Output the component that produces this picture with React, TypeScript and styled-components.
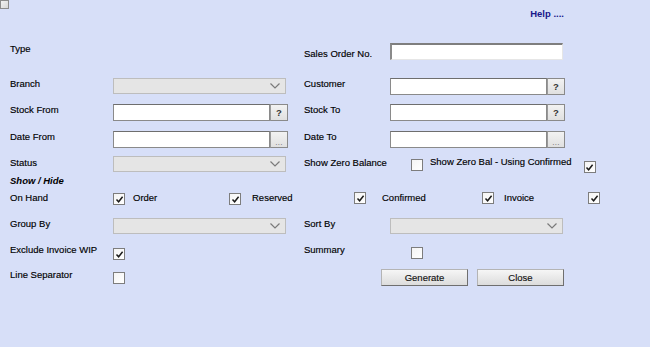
import React from "react";
import styled, { createGlobalStyle } from "styled-components";

const GlobalStyle = createGlobalStyle`
  html, body {
    margin: 0;
    padding: 0;
    background: #d7dff8;
  }
  body {
    font-family: "Liberation Sans", Arial, sans-serif;
    font-size: 9.5px;
    color: #000;
    -webkit-text-stroke: 0.15px #000;
  }
`;

const Page = styled.div`
  width: 650px;
  height: 347px;
  overflow: hidden;
  background: #d7dff8;
`;

const CornerBox = styled.div`
  width: 9px;
  height: 9px;
  box-sizing: border-box;
  border: 1px solid #8c8c8c;
  background: linear-gradient(135deg, #f2f2f2, #d8d8d8);
`;

const HelpRow = styled.div`
  margin-top: -1px;
  padding-right: 86px;
  text-align: right;
  line-height: 12px;
`;

const HelpLink = styled.a`
  color: #17178a;
  -webkit-text-stroke: 0;
  font-weight: bold;
  text-decoration: none;
`;

const Row = styled.div<{ $top: number }>`
  display: grid;
  grid-template-columns: 103px 191px 86px 1fr;
  align-items: start;
  padding-left: 10px;
  margin-top: ${(p) => p.$top}px;
`;

const PairRow = styled.div<{ $top: number; $cols: string }>`
  display: grid;
  grid-template-columns: ${(p) => p.$cols};
  align-items: start;
  padding-left: 10px;
  margin-top: ${(p) => p.$top}px;
`;

const Label = styled.span<{ $pt?: number }>`
  line-height: 12px;
  padding-top: ${(p) => p.$pt ?? 0}px;
  white-space: nowrap;
`;

const SectionTitle = styled.span`
  line-height: 12px;
  font-weight: bold;
  font-style: italic;
  -webkit-text-stroke: 0;
`;

const TextField = styled.input`
  width: 173px;
  height: 17px;
  box-sizing: border-box;
  margin: 0;
  padding: 0 2px;
  background: #fff;
  border-style: solid;
  border-width: 2px 1px 1px 2px;
  border-color: #7e7e7e #e6e6e6 #e6e6e6 #8a8a8a;
  font: inherit;
`;

const Lookup = styled.div`
  display: flex;
  height: 17px;
`;

const LookupInput = styled.input`
  width: 157px;
  height: 17px;
  box-sizing: border-box;
  margin: 0;
  padding: 0 2px;
  background: #fff;
  border: 1px solid #8a8a8a;
  border-top-color: #6e6e6e;
  font: inherit;
`;

const LookupButton = styled.button<{ $dots?: boolean }>`
  width: 18px;
  height: 17px;
  box-sizing: border-box;
  margin: 0;
  padding: 0;
  border: 1px solid #8a8a8a;
  border-left-color: #9a9a9a;
  background: linear-gradient(#f2f2f2, #e0e0e0);
  color: ${(p) => (p.$dots ? "#666" : "#333")};
  -webkit-text-stroke: 0;
  font-family: "Liberation Sans", Arial, sans-serif;
  font-size: ${(p) => (p.$dots ? "8px" : "9.5px")};
  font-weight: ${(p) => (p.$dots ? "normal" : "bold")};
  line-height: ${(p) => (p.$dots ? "21px" : "15px")};
  letter-spacing: ${(p) => (p.$dots ? "0.3px" : "0")};
`;

const SelectBox = styled.div`
  position: relative;
  width: 173px;
  height: 16px;
  box-sizing: border-box;
  border: 1px solid #bdbdbd;
  background: #e5e5e5;
`;

const Chevron = styled.svg`
  position: absolute;
  right: 5px;
  top: 4px;
`;

const Box = styled.span<{ $mt?: number; $ml?: number }>`
  display: inline-flex;
  align-items: center;
  justify-content: center;
  width: 12px;
  height: 12px;
  box-sizing: border-box;
  margin-top: ${(p) => p.$mt ?? 0}px;
  margin-left: ${(p) => p.$ml ?? 0}px;
  border: 1px solid #7d7d7d;
  background: linear-gradient(135deg, #f4f4f4, #ffffff);
`;

const ZeroBalance = styled.div`
  display: flex;
  align-items: flex-start;
`;

const ButtonBar = styled.div`
  grid-column: 3 / 5;
  display: flex;
  gap: 9px;
  padding-left: 77px;
`;

const ActionButton = styled.button`
  width: 87px;
  height: 17px;
  box-sizing: border-box;
  margin: 0;
  padding: 0;
  border: 1px solid;
  border-color: #b4b4b4 #6f6f6f #6f6f6f #b4b4b4;
  background: linear-gradient(#f6f6f6, #dcdcdc);
  color: #111;
  -webkit-text-stroke: 0.15px #111;
  font-family: "Liberation Sans", Arial, sans-serif;
  font-size: 9.5px;
  line-height: 15px;
`;

const Check = ({ checked, mt, ml }: { checked?: boolean; mt?: number; ml?: number }) => (
  <Box $mt={mt} $ml={ml}>
    {checked && (
      <svg width="9" height="9" viewBox="0 0 9 9">
        <path d="M1.5 4.6 L3.6 6.8 L7.6 1.8" fill="none" stroke="#1a1a1a" strokeWidth="1.5" />
      </svg>
    )}
  </Box>
);

const Select = () => (
  <SelectBox>
    <Chevron width="10" height="6" viewBox="0 0 10 6">
      <path d="M0.5 0.5 L5 5 L9.5 0.5" fill="none" stroke="#7a7a7a" strokeWidth="1.2" />
    </Chevron>
  </SelectBox>
);

const LookupField = ({ dots }: { dots?: boolean }) => (
  <Lookup>
    <LookupInput defaultValue="" />
    <LookupButton $dots={dots}>{dots ? "..." : "?"}</LookupButton>
  </Lookup>
);

export default function App() {
  return (
    <Page>
      <GlobalStyle />
      <CornerBox />
      <HelpRow>
        <HelpLink href="#">Help ....</HelpLink>
      </HelpRow>

      <Row $top={23}>
        <Label>Type</Label>
        <span />
        <Label $pt={5}>Sales Order No.</Label>
        <TextField defaultValue="" />
      </Row>

      <Row $top={18}>
        <Label>Branch</Label>
        <Select />
        <Label>Customer</Label>
        <LookupField />
      </Row>

      <Row $top={9}>
        <Label>Stock From</Label>
        <LookupField />
        <Label>Stock To</Label>
        <LookupField />
      </Row>

      <Row $top={10}>
        <Label>Date From</Label>
        <LookupField dots />
        <Label>Date To</Label>
        <LookupField dots />
      </Row>

      <Row $top={8}>
        <Label $pt={1}>Status</Label>
        <Select />
        <Label $pt={1}>Show Zero Balance</Label>
        <ZeroBalance>
          <Check mt={3} ml={21} />
          <Label style={{ marginLeft: 7 }}>Show Zero Bal - Using Confirmed</Label>
          <Check checked mt={5} ml={12} />
        </ZeroBalance>
      </Row>

      <Row $top={2}>
        <SectionTitle>Show / Hide</SectionTitle>
      </Row>

      <PairRow $top={4} $cols="103px 20px 96px 23px 102px 28px 100px 22px 84px 12px">
        <Label $pt={1}>On Hand</Label>
        <Check checked mt={2} />
        <Label $pt={1}>Order</Label>
        <Check checked mt={2} />
        <Label $pt={1}>Reserved</Label>
        <Check checked mt={1} />
        <Label $pt={1}>Confirmed</Label>
        <Check checked mt={1} />
        <Label $pt={1}>Invoice</Label>
        <Check checked mt={1} />
      </PairRow>

      <Row $top={13}>
        <Label>Group By</Label>
        <Select />
        <Label>Sort By</Label>
        <Select />
      </Row>

      <Row $top={10}>
        <Label>Exclude Invoice WIP</Label>
        <Check checked mt={4} />
        <Label>Summary</Label>
        <Check mt={3} ml={21} />
      </Row>

      <Row $top={9}>
        <Label>Line Separator</Label>
        <Check mt={3} />
        <ButtonBar>
          <ActionButton>Generate</ActionButton>
          <ActionButton>Close</ActionButton>
        </ButtonBar>
      </Row>
    </Page>
  );
}
